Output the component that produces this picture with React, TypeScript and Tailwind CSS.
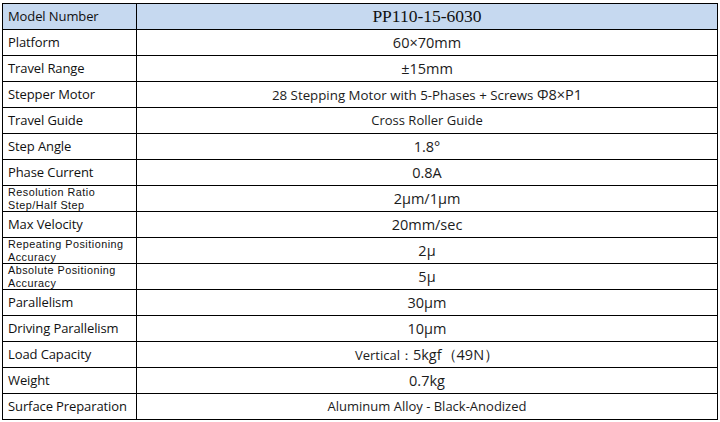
import React from "react";

const sans = { fontFamily: '"Open Sans", "Noto Sans", sans-serif' };
const smallFont = { fontFamily: '"Liberation Sans", Arial, sans-serif' };

type Row = { label: React.ReactNode; value: React.ReactNode; small?: boolean };

const small = "text-[10.8px] leading-[12.5px] tracking-[0.5px]";

const rows: Row[] = [
  { label: "Platform", value: <span className="text-[14.5px]">60×70mm</span> },
  { label: "Travel Range", value: <span className="text-[14.5px]">±15mm</span> },
  {
    label: "Stepper Motor",
    value: (
      <span className="text-[13.3px]">
        28 Stepping Motor with 5-Phases + Screws{" "}
        <span className="text-[14.5px]">Φ8×P1</span>
      </span>
    ),
  },
  { label: "Travel Guide", value: <span className="text-[13px]">Cross Roller Guide</span> },
  { label: "Step Angle", value: <span className="text-[14.5px]">1.8°</span> },
  { label: "Phase Current", value: <span className="text-[14.5px]">0.8A</span> },
  {
    label: (
      <span className={small} style={smallFont}>
        Resolution Ratio
        <br />
        Step/Half Step
      </span>
    ),
    small: true,
    value: <span className="text-[14.5px]">2μm/1μm</span>,
  },
  { label: "Max Velocity", value: <span className="text-[14.5px]">20mm/sec</span> },
  {
    label: (
      <span className={small} style={smallFont}>
        Repeating Positioning
        <br />
        Accuracy
      </span>
    ),
    small: true,
    value: <span className="text-[14.5px]">2μ</span>,
  },
  {
    label: (
      <span className={small} style={smallFont}>
        Absolute Positioning
        <br />
        Accuracy
      </span>
    ),
    small: true,
    value: <span className="text-[14.5px]">5μ</span>,
  },
  { label: "Parallelism", value: <span className="text-[14.5px]">30μm</span> },
  { label: "Driving Parallelism", value: <span className="text-[14.5px]">10μm</span> },
  {
    label: "Load Capacity",
    value: (
      <span className="text-[13px]">
        Vertical：<span className="text-[14.5px]">5kgf（49N）</span>
      </span>
    ),
  },
  { label: "Weight", value: <span className="text-[14.5px]">0.7kg</span> },
  {
    label: "Surface Preparation",
    value: <span className="text-[13px]">Aluminum Alloy - Black-Anodized</span>,
  },
];

export default function App() {
  return (
    <div className="w-[720px] h-[422px] bg-white pt-[3px] pl-[2px]" style={sans}>
      <div className="w-[716px] border-t border-l border-r border-black text-[#111]">
        <div className="flex h-[26px] border-b border-black bg-[#c6d9f0]">
          <div className="w-[134px] border-r border-black flex items-center pl-[5px] text-[13px] tracking-[-0.1px]">
            Model Number
          </div>
          <div
            className="flex-1 flex items-center justify-center text-[17.5px]"
            style={{ fontFamily: '"Liberation Serif", "DejaVu Serif", serif' }}
          >
            PP110-15-6030
          </div>
        </div>
        {rows.map((r, i) => (
          <div key={i} className="flex h-[26px] border-b border-black">
            <div
              className={
                r.small
                  ? "w-[134px] border-r border-black flex items-center pl-[5px]"
                  : "w-[134px] border-r border-black flex items-center pl-[5px] text-[13px] tracking-[-0.1px]"
              }
            >
              {r.label}
            </div>
            <div className="flex-1 flex items-center justify-center text-[#1c1c1c]">{r.value}</div>
          </div>
        ))}
      </div>
    </div>
  );
}
